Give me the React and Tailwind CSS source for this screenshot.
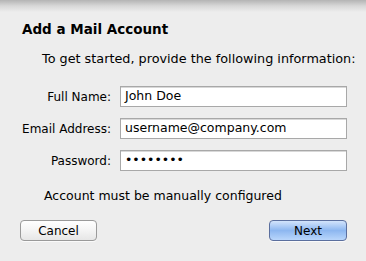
export default function App() {
  const fields = [
    { label: 'Full Name:', value: 'John Doe' },
    { label: 'Email Address:', value: 'username@company.com' },
    { label: 'Password:', value: '••••••••' },
  ];

  return (
    <div
      className="w-[366px] h-[261px] bg-[#ededed] text-black overflow-hidden"
      style={{ fontFamily: '"DejaVu Sans", "Liberation Sans", sans-serif' }}
    >
      <div className="h-[12px] bg-linear-to-b from-[#b4b4b4] via-[#d8d8d8] to-[#ededed]" />

      <div className="pl-[22px] pt-[9px] text-[13.5px] font-bold leading-[16px]">Add a Mail Account</div>

      <div className="pl-[42px] pt-[14px] text-[12.8px] leading-[16px]">
        To get started, provide the following information:
      </div>

      <div className="flex flex-col gap-[11px] pt-[19px]">
        {fields.map((f) => (
          <div key={f.label} className="flex items-center">
            <div className="w-[112px] text-right text-[12px] pr-[1px]">{f.label}</div>
            <div className="ml-[8px] w-[227px] h-[21px] bg-white border border-[#a8a8a8] shadow-[inset_0_1px_0_#d8d8d8] flex items-center pl-[4px] text-[12.5px]">
              {f.value}
            </div>
          </div>
        ))}
      </div>

      <div className="pl-[44px] pt-[17px] text-[12.5px] leading-[16px]">Account must be manually configured</div>

      <div className="flex justify-between pl-[20px] pr-[19px] pt-[16px]">
        <button className="w-[77px] h-[21px] rounded-[4px] border border-[#9a9a9a] bg-linear-to-b from-white via-[#f4f4f4] to-[#e6e6e6] text-[12px] leading-none shadow-[0_1px_0_#fafafa]">
          Cancel
        </button>
        <button className="w-[78px] h-[21px] rounded-[4px] border border-[#5b6f9e] bg-linear-to-b from-[#d3e4fb] via-[#8db7f0] to-[#b9d6fb] text-[12px] leading-none shadow-[0_1px_0_#fafafa]">
          Next
        </button>
      </div>
    </div>
  );
}
